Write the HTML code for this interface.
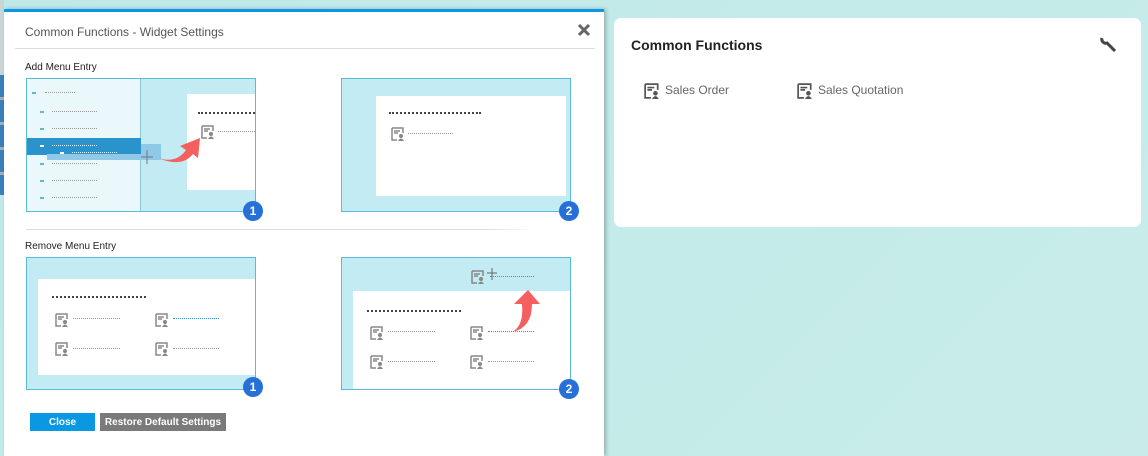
<!DOCTYPE html>
<html><head><meta charset="utf-8"><style>
*{margin:0;padding:0;box-sizing:border-box}
body{width:1148px;height:456px;overflow:hidden;position:relative;font-family:"Liberation Sans",sans-serif;background:linear-gradient(135deg,#bfe9e8 0%,#c4ebe9 60%,#c9ecea 100%)}
.a{position:absolute}
.dot{position:absolute;height:0;border-top:2px dotted #999}
.dk{border-top-color:#444}
.bl{border-top-color:#2a9ad6}
.bd{position:absolute;width:20px;height:20px;border-radius:50%;background:#2770d8;color:#fff;font-weight:bold;font-size:12px;text-align:center;line-height:20px}
.ic{position:absolute;width:14px;height:14px}
</style></head><body>
<div class="a" style="left:0;top:0;width:4px;height:75px;background:#c9d6d8"></div>
<div class="a" style="left:0;top:75px;width:4px;height:120px;background:repeating-linear-gradient(#3b7fbf 0 22px,#9fb0bb 22px 25px)"></div>
<div class="a" style="left:4px;top:9px;width:600px;height:447px;background:#fff;border-top:3px solid #0a97e6;box-shadow:2px 0 4px rgba(0,0,0,.25)"></div>
<div class="a" style="left:25px;top:25px;font-size:12px;color:#555">Common Functions - Widget Settings</div>
<svg class="a" style="left:577px;top:23px" width="14" height="14" viewBox="0 0 14 14"><path d="M2 2L12 12M12 2L2 12" stroke="#666" stroke-width="3"/></svg>
<div class="a" style="left:15px;top:48px;width:580px;height:1px;background:#ddd"></div>
<div class="a" style="left:25px;top:62px;font-size:10px;color:#222">Add Menu Entry</div>

<!-- panel 1 -->
<div class="a" style="left:26px;top:78px;width:230px;height:134px;background:#c3ebf3;border:1px solid #5bbad6"></div>
<div class="a" style="left:27px;top:79px;width:114px;height:132px;background:#eaf8fc;border-right:1px solid #8ec7d6"></div>
<div class="a" style="left:187px;top:94px;width:68px;height:96px;background:#fff"></div>
<div class="a" style="left:27px;top:138px;width:114px;height:17px;background:#2a93cc"></div>
<div class="a" style="left:47px;top:154px;width:114px;height:6px;background:#8fc9e8"></div>
<div class="a" style="left:141px;top:144px;width:20px;height:16px;background:#8fc9e8"></div>
<div class="a" style="left:32px;top:92px;width:4px;height:2px;background:#5bbad6"></div><div class="dot" style="left:45px;top:92px;width:30px;border-top-width:1px"></div>
<div class="a" style="left:40px;top:111px;width:4px;height:2px;background:#5bbad6"></div><div class="dot" style="left:52px;top:111px;width:45px;border-top-width:1px"></div>
<div class="a" style="left:40px;top:128px;width:4px;height:2px;background:#5bbad6"></div><div class="dot" style="left:52px;top:128px;width:45px;border-top-width:1px"></div>
<div class="a" style="left:40px;top:145px;width:4px;height:2px;background:#fff"></div><div class="dot" style="left:52px;top:145px;width:45px;border-top:1px dotted #fff"></div>
<div class="a" style="left:60px;top:152px;width:4px;height:2px;background:#fff"></div><div class="dot" style="left:72px;top:152px;width:45px;border-top:1px dotted #fff"></div>
<div class="a" style="left:40px;top:163px;width:4px;height:2px;background:#5bbad6"></div><div class="dot" style="left:52px;top:163px;width:45px;border-top-width:1px"></div>
<div class="a" style="left:40px;top:180px;width:4px;height:2px;background:#5bbad6"></div><div class="dot" style="left:52px;top:180px;width:45px;border-top-width:1px"></div>
<div class="a" style="left:40px;top:197px;width:4px;height:2px;background:#5bbad6"></div><div class="dot" style="left:52px;top:197px;width:45px;border-top-width:1px"></div>
<div class="dot dk" style="left:198px;top:112px;width:57px"></div>
<svg class="ic" style="left:201px;top:125px" viewBox="0 0 14 14"><path d="M1 1h11v5M1 1v12h5M3 4h6M3 6h4" stroke="#888" fill="none" stroke-width="1.5"/><circle cx="10" cy="9" r="2" fill="#888"/><path d="M7 14q3-5 6 0z" fill="#888"/></svg>
<div class="dot" style="left:218px;top:131px;width:37px;border-top-width:1px"></div>
<svg class="a" style="left:141px;top:150px" width="12" height="14" viewBox="0 0 12 14"><path d="M6 0v14M0 7h12" stroke="#777" stroke-width="1"/></svg>
<svg class="a" style="left:156px;top:134px" width="48" height="32" viewBox="0 0 48 32"><path d="M2 24Q20 30 30 16L24 12L44 4L42 24L37 20Q26 34 2 24z" fill="#f45f5f"/></svg>
<div class="bd" style="left:243px;top:201px">1</div>

<!-- panel 2 -->
<div class="a" style="left:341px;top:78px;width:230px;height:134px;background:#c3ebf3;border:1px solid #5bbad6"></div>
<div class="a" style="left:376px;top:96px;width:190px;height:100px;background:#fff"></div>
<div class="dot dk" style="left:389px;top:112px;width:92px"></div>
<svg class="ic" style="left:391px;top:127px" viewBox="0 0 14 14"><path d="M1 1h11v5M1 1v12h5M3 4h6M3 6h4" stroke="#888" fill="none" stroke-width="1.5"/><circle cx="10" cy="9" r="2" fill="#888"/><path d="M7 14q3-5 6 0z" fill="#888"/></svg>
<div class="dot" style="left:408px;top:133px;width:45px;border-top-width:1px"></div>
<div class="bd" style="left:559px;top:201px">2</div>

<div class="a" style="left:26px;top:229px;width:510px;height:1px;background:linear-gradient(90deg,#ddd,#ddd 90%,#fff)"></div>
<div class="a" style="left:25px;top:241px;font-size:10px;color:#222">Remove Menu Entry</div>

<!-- panel 3 -->
<div class="a" style="left:26px;top:257px;width:230px;height:133px;background:#c3ebf3;border:1px solid #5bbad6"></div>
<div class="a" style="left:38px;top:279px;width:217px;height:96px;background:#fff"></div>
<div class="dot dk" style="left:52px;top:296px;width:94px"></div>
<svg class="ic" style="left:55px;top:313px" viewBox="0 0 14 14"><path d="M1 1h11v5M1 1v12h5M3 4h6M3 6h4" stroke="#888" fill="none" stroke-width="1.5"/><circle cx="10" cy="9" r="2" fill="#888"/><path d="M7 14q3-5 6 0z" fill="#888"/></svg>
<div class="dot" style="left:73px;top:318px;width:47px;border-top-width:1px"></div>
<svg class="ic" style="left:155px;top:313px" viewBox="0 0 14 14"><path d="M1 1h11v5M1 1v12h5M3 4h6M3 6h4" stroke="#888" fill="none" stroke-width="1.5"/><circle cx="10" cy="9" r="2" fill="#888"/><path d="M7 14q3-5 6 0z" fill="#888"/></svg>
<div class="dot bl" style="left:173px;top:318px;width:46px;border-top-width:1px"></div>
<svg class="ic" style="left:55px;top:342px" viewBox="0 0 14 14"><path d="M1 1h11v5M1 1v12h5M3 4h6M3 6h4" stroke="#888" fill="none" stroke-width="1.5"/><circle cx="10" cy="9" r="2" fill="#888"/><path d="M7 14q3-5 6 0z" fill="#888"/></svg>
<div class="dot" style="left:73px;top:348px;width:47px;border-top-width:1px"></div>
<svg class="ic" style="left:155px;top:342px" viewBox="0 0 14 14"><path d="M1 1h11v5M1 1v12h5M3 4h6M3 6h4" stroke="#888" fill="none" stroke-width="1.5"/><circle cx="10" cy="9" r="2" fill="#888"/><path d="M7 14q3-5 6 0z" fill="#888"/></svg>
<div class="dot" style="left:173px;top:348px;width:46px;border-top-width:1px"></div>
<div class="bd" style="left:243px;top:377px">1</div>

<!-- panel 4 -->
<div class="a" style="left:341px;top:257px;width:230px;height:133px;background:#c3ebf3;border:1px solid #5bbad6"></div>
<div class="a" style="left:353px;top:291px;width:217px;height:98px;background:#fff"></div>
<svg class="ic" style="left:471px;top:270px" viewBox="0 0 14 14"><path d="M1 1h11v5M1 1v12h5M3 4h6M3 6h4" stroke="#888" fill="none" stroke-width="1.5"/><circle cx="10" cy="9" r="2" fill="#888"/><path d="M7 14q3-5 6 0z" fill="#888"/></svg>
<svg class="a" style="left:487px;top:268px" width="10" height="12" viewBox="0 0 10 12"><path d="M5 0v12M0 5h10" stroke="#666" stroke-width="1"/></svg>
<div class="dot bl" style="left:490px;top:276px;width:44px;border-top-width:1px"></div>
<div class="dot dk" style="left:367px;top:310px;width:94px"></div>
<svg class="ic" style="left:370px;top:326px" viewBox="0 0 14 14"><path d="M1 1h11v5M1 1v12h5M3 4h6M3 6h4" stroke="#888" fill="none" stroke-width="1.5"/><circle cx="10" cy="9" r="2" fill="#888"/><path d="M7 14q3-5 6 0z" fill="#888"/></svg>
<div class="dot" style="left:388px;top:331px;width:47px;border-top-width:1px"></div>
<svg class="ic" style="left:470px;top:326px" viewBox="0 0 14 14"><path d="M1 1h11v5M1 1v12h5M3 4h6M3 6h4" stroke="#888" fill="none" stroke-width="1.5"/><circle cx="10" cy="9" r="2" fill="#888"/><path d="M7 14q3-5 6 0z" fill="#888"/></svg>
<div class="dot bl" style="left:488px;top:331px;width:46px;border-top-width:1px"></div>
<svg class="ic" style="left:370px;top:355px" viewBox="0 0 14 14"><path d="M1 1h11v5M1 1v12h5M3 4h6M3 6h4" stroke="#888" fill="none" stroke-width="1.5"/><circle cx="10" cy="9" r="2" fill="#888"/><path d="M7 14q3-5 6 0z" fill="#888"/></svg>
<div class="dot" style="left:388px;top:361px;width:47px;border-top-width:1px"></div>
<svg class="ic" style="left:470px;top:355px" viewBox="0 0 14 14"><path d="M1 1h11v5M1 1v12h5M3 4h6M3 6h4" stroke="#888" fill="none" stroke-width="1.5"/><circle cx="10" cy="9" r="2" fill="#888"/><path d="M7 14q3-5 6 0z" fill="#888"/></svg>
<div class="dot" style="left:488px;top:361px;width:46px;border-top-width:1px"></div>
<svg class="a" style="left:508px;top:290px" width="32" height="44" viewBox="0 0 32 44"><path d="M4 42Q16 36 14 14L6 14L20 0L32 14L24 14Q24 38 4 42z" fill="#f45f5f"/></svg>
<div class="bd" style="left:559px;top:379px">2</div>

<div class="a" style="left:30px;top:413px;width:65px;height:18px;background:#0a98e3;color:#fff;font-size:10px;font-weight:bold;text-align:center;line-height:19px">Close</div>
<div class="a" style="left:100px;top:413px;width:126px;height:18px;background:#7a7a7a;color:#fff;font-size:10px;font-weight:bold;text-align:center;line-height:19px">Restore Default Settings</div>

<!-- right card -->
<div class="a" style="left:614px;top:18px;width:527px;height:209px;background:#fff;border-radius:7px"></div>
<div class="a" style="left:631px;top:37px;font-size:14px;font-weight:bold;color:#222">Common Functions</div>
<svg class="a" style="left:1100px;top:36px" width="18" height="16" viewBox="0 0 18 16"><path d="M2 2a4 4 0 0 0 5 5l8 8" stroke="#444" stroke-width="3" fill="none"/></svg>
<svg class="a" style="left:644px;top:83px" width="16" height="16" viewBox="0 0 14 14"><path d="M1 1h11v5M1 1v12h5M3 4h6M3 6h4" stroke="#555" fill="none" stroke-width="1.5"/><circle cx="10" cy="9" r="2" fill="#555"/><path d="M7 14q3-5 6 0z" fill="#555"/></svg>
<div class="a" style="left:665px;top:83px;font-size:12px;color:#666">Sales Order</div>
<svg class="a" style="left:797px;top:83px" width="16" height="16" viewBox="0 0 14 14"><path d="M1 1h11v5M1 1v12h5M3 4h6M3 6h4" stroke="#555" fill="none" stroke-width="1.5"/><circle cx="10" cy="9" r="2" fill="#555"/><path d="M7 14q3-5 6 0z" fill="#555"/></svg>
<div class="a" style="left:818px;top:83px;font-size:12px;color:#666">Sales Quotation</div>
</body></html>
